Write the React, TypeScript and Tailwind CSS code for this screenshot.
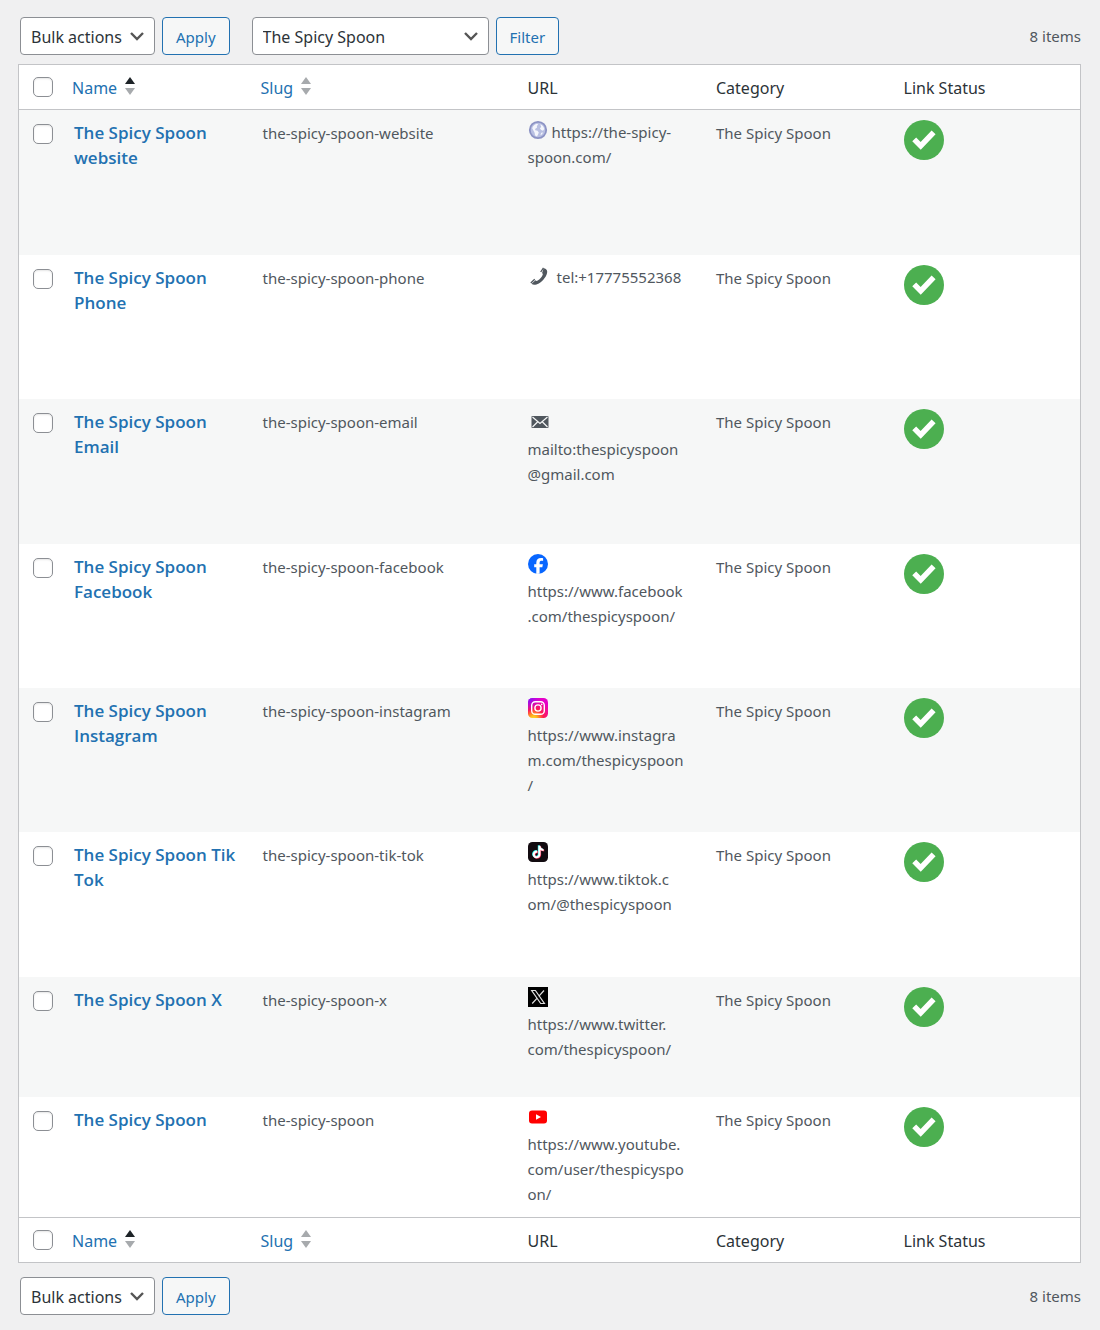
import type { ReactNode } from "react";

type IconName = "globe" | "phone" | "mail" | "facebook" | "instagram" | "tiktok" | "x" | "youtube";

type LinkItem = {
  id: number;
  name: string;
  slug: string;
  icon: IconName;
  url: string[];
  category: string;
  rowHeight: string;
};

const links: LinkItem[] = [
  { id: 1, name: "The Spicy Spoon website", slug: "the-spicy-spoon-website", icon: "globe", url: ["https://the-spicy-", "spoon.com/"], category: "The Spicy Spoon", rowHeight: "h-[145px]" },
  { id: 2, name: "The Spicy Spoon Phone", slug: "the-spicy-spoon-phone", icon: "phone", url: ["tel:+17775552368"], category: "The Spicy Spoon", rowHeight: "h-[144px]" },
  { id: 3, name: "The Spicy Spoon Email", slug: "the-spicy-spoon-email", icon: "mail", url: ["mailto:thespicyspoon", "@gmail.com"], category: "The Spicy Spoon", rowHeight: "h-[145px]" },
  { id: 4, name: "The Spicy Spoon Facebook", slug: "the-spicy-spoon-facebook", icon: "facebook", url: ["https://www.facebook", ".com/thespicyspoon/"], category: "The Spicy Spoon", rowHeight: "h-[144px]" },
  { id: 5, name: "The Spicy Spoon Instagram", slug: "the-spicy-spoon-instagram", icon: "instagram", url: ["https://www.instagra", "m.com/thespicyspoon", "/"], category: "The Spicy Spoon", rowHeight: "h-[144px]" },
  { id: 6, name: "The Spicy Spoon Tik Tok", slug: "the-spicy-spoon-tik-tok", icon: "tiktok", url: ["https://www.tiktok.c", "om/@thespicyspoon"], category: "The Spicy Spoon", rowHeight: "h-[145px]" },
  { id: 7, name: "The Spicy Spoon X", slug: "the-spicy-spoon-x", icon: "x", url: ["https://www.twitter.", "com/thespicyspoon/"], category: "The Spicy Spoon", rowHeight: "h-[120px]" },
  { id: 8, name: "The Spicy Spoon", slug: "the-spicy-spoon", icon: "youtube", url: ["https://www.youtube.", "com/user/thespicyspo", "on/"], category: "The Spicy Spoon", rowHeight: "h-[120px]" },
];

// These icons share the first line with the URL, the others sit above it
const inlineIcons: IconName[] = ["globe", "phone"];

const tiktokNote =
  "M12.525.02c1.31-.02 2.61-.01 3.91-.02.08 1.53.63 3.09 1.75 4.17 1.12 1.11 2.7 1.62 4.24 1.79v4.03c-1.44-.05-2.89-.35-4.2-.97-.57-.26-1.1-.59-1.62-.93-.01 2.92.01 5.84-.02 8.75-.08 1.4-.54 2.79-1.35 3.94-1.31 1.92-3.58 3.17-5.91 3.21-1.43.08-2.86-.31-4.08-1.03-2.02-1.19-3.44-3.37-3.65-5.71-.02-.5-.03-1-.01-1.49.18-1.9 1.12-3.72 2.58-4.96 1.66-1.44 3.98-2.13 6.15-1.72.02 1.48-.04 2.96-.04 4.44-.99-.32-2.15-.23-3.02.37-.63.41-1.11 1.04-1.36 1.75-.21.51-.15 1.07-.14 1.61.24 1.64 1.82 3.02 3.5 2.87 1.12-.01 2.19-.66 2.77-1.61.19-.33.4-.67.41-1.06.1-1.79.06-3.57.07-5.36.01-4.03-.01-8.05.02-12.07z";

const drawings: Record<IconName, ReactNode> = {
  globe: (
    <>
      <circle cx="10" cy="10" r="8.2" fill="#b9c0e2" stroke="#8c93c4" strokeWidth="1.8" />
      <path d="M4.200 8.200C5 5.800 6.800 4.200 9 3.700l1.200.9-1.400 1.500.3 1.500-2 1.300.2 1.300 2.200.6 1.300 1.700-.9 2.300-.9 1.700-1.900-1-.5-2.700z" fill="#f4f6fc" />
      <path d="M12.200 4.200c2.200.8 3.700 2.500 4.100 4.900l-1.300 1.600-1.800-.6-1.300-1.700 1.300-1.600z" fill="#f4f6fc" />
      <path d="m13.200 12.800 2-.4-1.400 2.200-1.400.6z" fill="#f4f6fc" />
    </>
  ),
  phone: (
    <>
      <path d="M15.600 1.200c1.900 0 3.500 1.300 3.600 3.300.2 4-4.200 9.600-8.400 12-2.700 1.500-5.700 2-7.200.3l3.900-3.500c.6.6 1.400.8 2.200.3 2.100-1.300 4.200-3.600 5-5.800.3-.8 0-1.400-.6-1.900z" fill="#50575e" />
      <path d="M12.700 5 15.500.9M2.800 15.900l3.900-3.600" fill="none" stroke="#50575e" strokeWidth="1.300" />
    </>
  ),
  mail: (
    <>
      <rect x="1.500" y="4" width="17" height="12" rx=".8" fill="#50575e" />
      <path d="m2.500 5 7.500 6.500L17.500 5M2.500 15l5-5M17.500 15l-5-5" fill="none" stroke="#f6f7f7" strokeWidth="1.200" />
    </>
  ),
  facebook: (
    <>
      <circle cx="10" cy="10" r="10" fill="#0866ff" />
      <path d="M8.300 19.900V13.200H6.200v-3h2.100V8.900c0-3.400 1.500-5 4.900-5 .6 0 1.300.1 1.900.3v2.700c-.4 0-.7-.1-1.200-.1-1.700 0-2.300.6-2.300 2.300v1.100h3.300l-.6 3h-2.700v6.600z" fill="#fff" />
    </>
  ),
  instagram: (
    <>
      <defs>
        <radialGradient id="ig-warm" cx=".28" cy="1.050" r="1">
          <stop offset="0" stopColor="#ffdd33" />
          <stop offset=".18" stopColor="#ffb71c" />
          <stop offset=".5" stopColor="#ff1a50" />
          <stop offset="1" stopColor="#e402c8" />
        </radialGradient>
        <radialGradient id="ig-cool" cx="-.05" cy="0" r=".7">
          <stop offset="0" stopColor="#5b1cff" />
          <stop offset="1" stopColor="#b000ff" stopOpacity="0" />
        </radialGradient>
      </defs>
      <rect width="20" height="20" rx="4.500" fill="url(#ig-warm)" />
      <rect width="20" height="20" rx="4.500" fill="url(#ig-cool)" />
      <rect x="3.700" y="3.700" width="12.600" height="12.600" rx="3.600" fill="none" stroke="#fff" strokeWidth="1.400" />
      <circle cx="10" cy="10" r="3.100" fill="none" stroke="#fff" strokeWidth="1.400" />
      <circle cx="13.700" cy="6.400" r=".8" fill="#fff" />
    </>
  ),
  tiktok: (
    <>
      <rect width="20" height="20" rx="4.500" fill="#120b10" />
      <path d={tiktokNote} transform="translate(3.300 3.300) scale(.52)" fill="#25f4ee" />
      <path d={tiktokNote} transform="translate(4.500 4.300) scale(.52)" fill="#fe2c55" />
      <path d={tiktokNote} transform="translate(3.900 3.800) scale(.52)" fill="#fff" />
    </>
  ),
  x: (
    <>
      <rect width="20" height="20" fill="#000" />
      <path d="M3.700 3.500h3.700l9 13h-3.700zM16 3.500l-5.300 5.900M9.200 11.100l-5 5.400" fill="none" stroke="#e0e0e0" strokeWidth="1.200" />
    </>
  ),
  youtube: (
    <>
      <rect x="1" y="3.500" width="18" height="13" rx="3" fill="#f00" />
      <path d="m8 7.300 5 2.700-5 2.700z" fill="#fff" />
    </>
  ),
};

const LinkIcon = ({ name }: { name: IconName }) => (
  <svg viewBox="0 0 20 20" aria-hidden="true" className="inline-block size-5 align-top">
    {drawings[name]}
  </svg>
);

const StatusOk = () => (
  <svg viewBox="0 0 40 40" role="img" aria-label="Link OK" className="block size-10">
    <circle cx="20" cy="20" r="20" fill="#4caf50" />
    <path d="m10.200 19.400 6.500 6.500L29.600 12.400" fill="none" stroke="#fff" strokeWidth="5.500" />
  </svg>
);

const Checkbox = ({ label }: { label: string }) => (
  <input
    type="checkbox"
    aria-label={label}
    className="block size-5 appearance-none rounded-[5px] border border-[#8c8f94] bg-white shadow-[inset_0_1px_2px_rgba(0,0,0,0.1)]"
  />
);

const Select = ({ label, option, width }: { label: string; option: string; width: string }) => (
  <div className={`grid items-center ${width}`}>
    <select
      aria-label={label}
      className="col-start-1 row-start-1 h-[38px] w-full appearance-none rounded border border-[#8c8f94] bg-white pt-[2px] pl-[10px] text-base text-[#2c3338]">
      <option>{option}</option>
    </select>
    <svg viewBox="0 0 20 20" aria-hidden="true" className="pointer-events-none col-start-1 row-start-1 mr-2 size-5 justify-self-end">
      <path d="m4 7 6 6 6-6" fill="none" stroke="#555" strokeWidth="2.400" />
    </svg>
  </div>
);

const ActionButton = ({ children }: { children: ReactNode }) => (
  <button type="button" className="h-[38px] rounded border border-[#2271b1] bg-[#f6f7f7] px-[13px] pt-[2px] text-[15px] text-[#2271b1]">
    {children}
  </button>
);

const SortLink = ({ label, isSorted }: { label: string; isSorted?: boolean }) => (
  <a href="#" className="inline-flex items-center gap-2 text-[#2271b1]">
    {label}
    <svg viewBox="0 0 10 18" aria-hidden="true" className="mb-1 h-[18px] w-[10px]">
      <path d="M5 0 10 7H0z" fill={isSorted ? "#1d2327" : "#a7aaad"} />
      <path d="M5 18 0 11h10z" fill="#a7aaad" />
    </svg>
  </a>
);

const HeadingRow = ({ border }: { border: string }) => {
  const cell = `h-[45px] pt-[2px] text-left font-normal ${border} border-[#c3c4c7]`;
  return (
    <tr className="text-base text-[#2c3338]">
      <td className={`h-[45px] w-[43px] pl-[14px] ${border} border-[#c3c4c7]`}>
        <Checkbox label="Select All" />
      </td>
      <th className={`pl-[10px] ${cell}`}>
        <SortLink label="Name" isSorted />
      </th>
      <th className={`w-[268px] pl-[11px] ${cell}`}>
        <SortLink label="Slug" />
      </th>
      <th className={`pl-[10px] ${cell}`}>URL</th>
      <th className={`pl-[11px] ${cell}`}>Category</th>
      <th className={`pl-[11px] ${cell}`}>Link Status</th>
    </tr>
  );
};

const LinkRow = ({ link }: { link: LinkItem }) => {
  const isInline = inlineIcons.includes(link.icon);
  return (
    <tr className={`align-top odd:bg-[#f6f7f7] ${link.rowHeight}`}>
      <td className="pt-[14px] pl-[14px]">
        <Checkbox label={`Select ${link.name}`} />
      </td>
      <td className="pt-[10px] pr-1 pl-3 font-['Open_Sans',sans-serif] text-[17px] font-semibold">
        <a href="#" className="text-[#2271b1]">{link.name}</a>
      </td>
      <td className="pt-[11px] pl-[13px]">{link.slug}</td>
      <td className="pt-[10px] pl-[10px] whitespace-nowrap">
        {isInline ? (
          <span className={link.icon === "phone" ? "mr-[9px] inline-block pt-[2px] align-top leading-5" : "mr-1 inline-block align-top leading-5"}>
            <LinkIcon name={link.icon} />
          </span>
        ) : (
          <div className={link.icon === "mail" ? "h-7 pt-[3px] pl-[2px]" : "h-[25px]"}>
            <LinkIcon name={link.icon} />
          </div>
        )}
        {link.url.map((line, index) => (
          <span key={line}>
            {index > 0 && <br />}
            {line}
          </span>
        ))}
      </td>
      <td className="pt-[11px] pl-[11px]">{link.category}</td>
      <td className="pt-[10px] pl-[11px]">
        <StatusOk />
      </td>
    </tr>
  );
};

const App = () => (
  <main className="min-h-screen bg-[#f0f0f1] pt-[17px] pr-[19px] pb-4 pl-[18px] font-['Noto_Sans','Open_Sans',sans-serif] text-[15px] leading-[25px] text-[#50575e]">
    {/* Top bar */}
    <div className="mb-[9px] flex items-center pl-[2px]">
      <div className="flex gap-[7px]">
        <Select label="Select bulk action" option="Bulk actions" width="w-[135px]" />
        <ActionButton>Apply</ActionButton>
      </div>
      <div className="ml-[22px] flex gap-[7px]">
        <Select label="Filter by category" option="The Spicy Spoon" width="w-[237px]" />
        <ActionButton>Filter</ActionButton>
      </div>
      <span className="ml-auto">{links.length} items</span>
    </div>

    {/* Links */}
    <table className="w-full table-fixed border-separate border-spacing-0 border border-[#c3c4c7] bg-white">
      <thead>
        <HeadingRow border="border-b" />
      </thead>
      <tbody>
        {links.map((link) => (
          <LinkRow key={link.id} link={link} />
        ))}
      </tbody>
      <tfoot>
        <HeadingRow border="border-t" />
      </tfoot>
    </table>

    {/* Bottom bar */}
    <div className="mt-[14px] flex items-center pl-[2px]">
      <div className="flex gap-[7px]">
        <Select label="Select bulk action" option="Bulk actions" width="w-[135px]" />
        <ActionButton>Apply</ActionButton>
      </div>
      <span className="ml-auto">{links.length} items</span>
    </div>
  </main>
);

export default App;
